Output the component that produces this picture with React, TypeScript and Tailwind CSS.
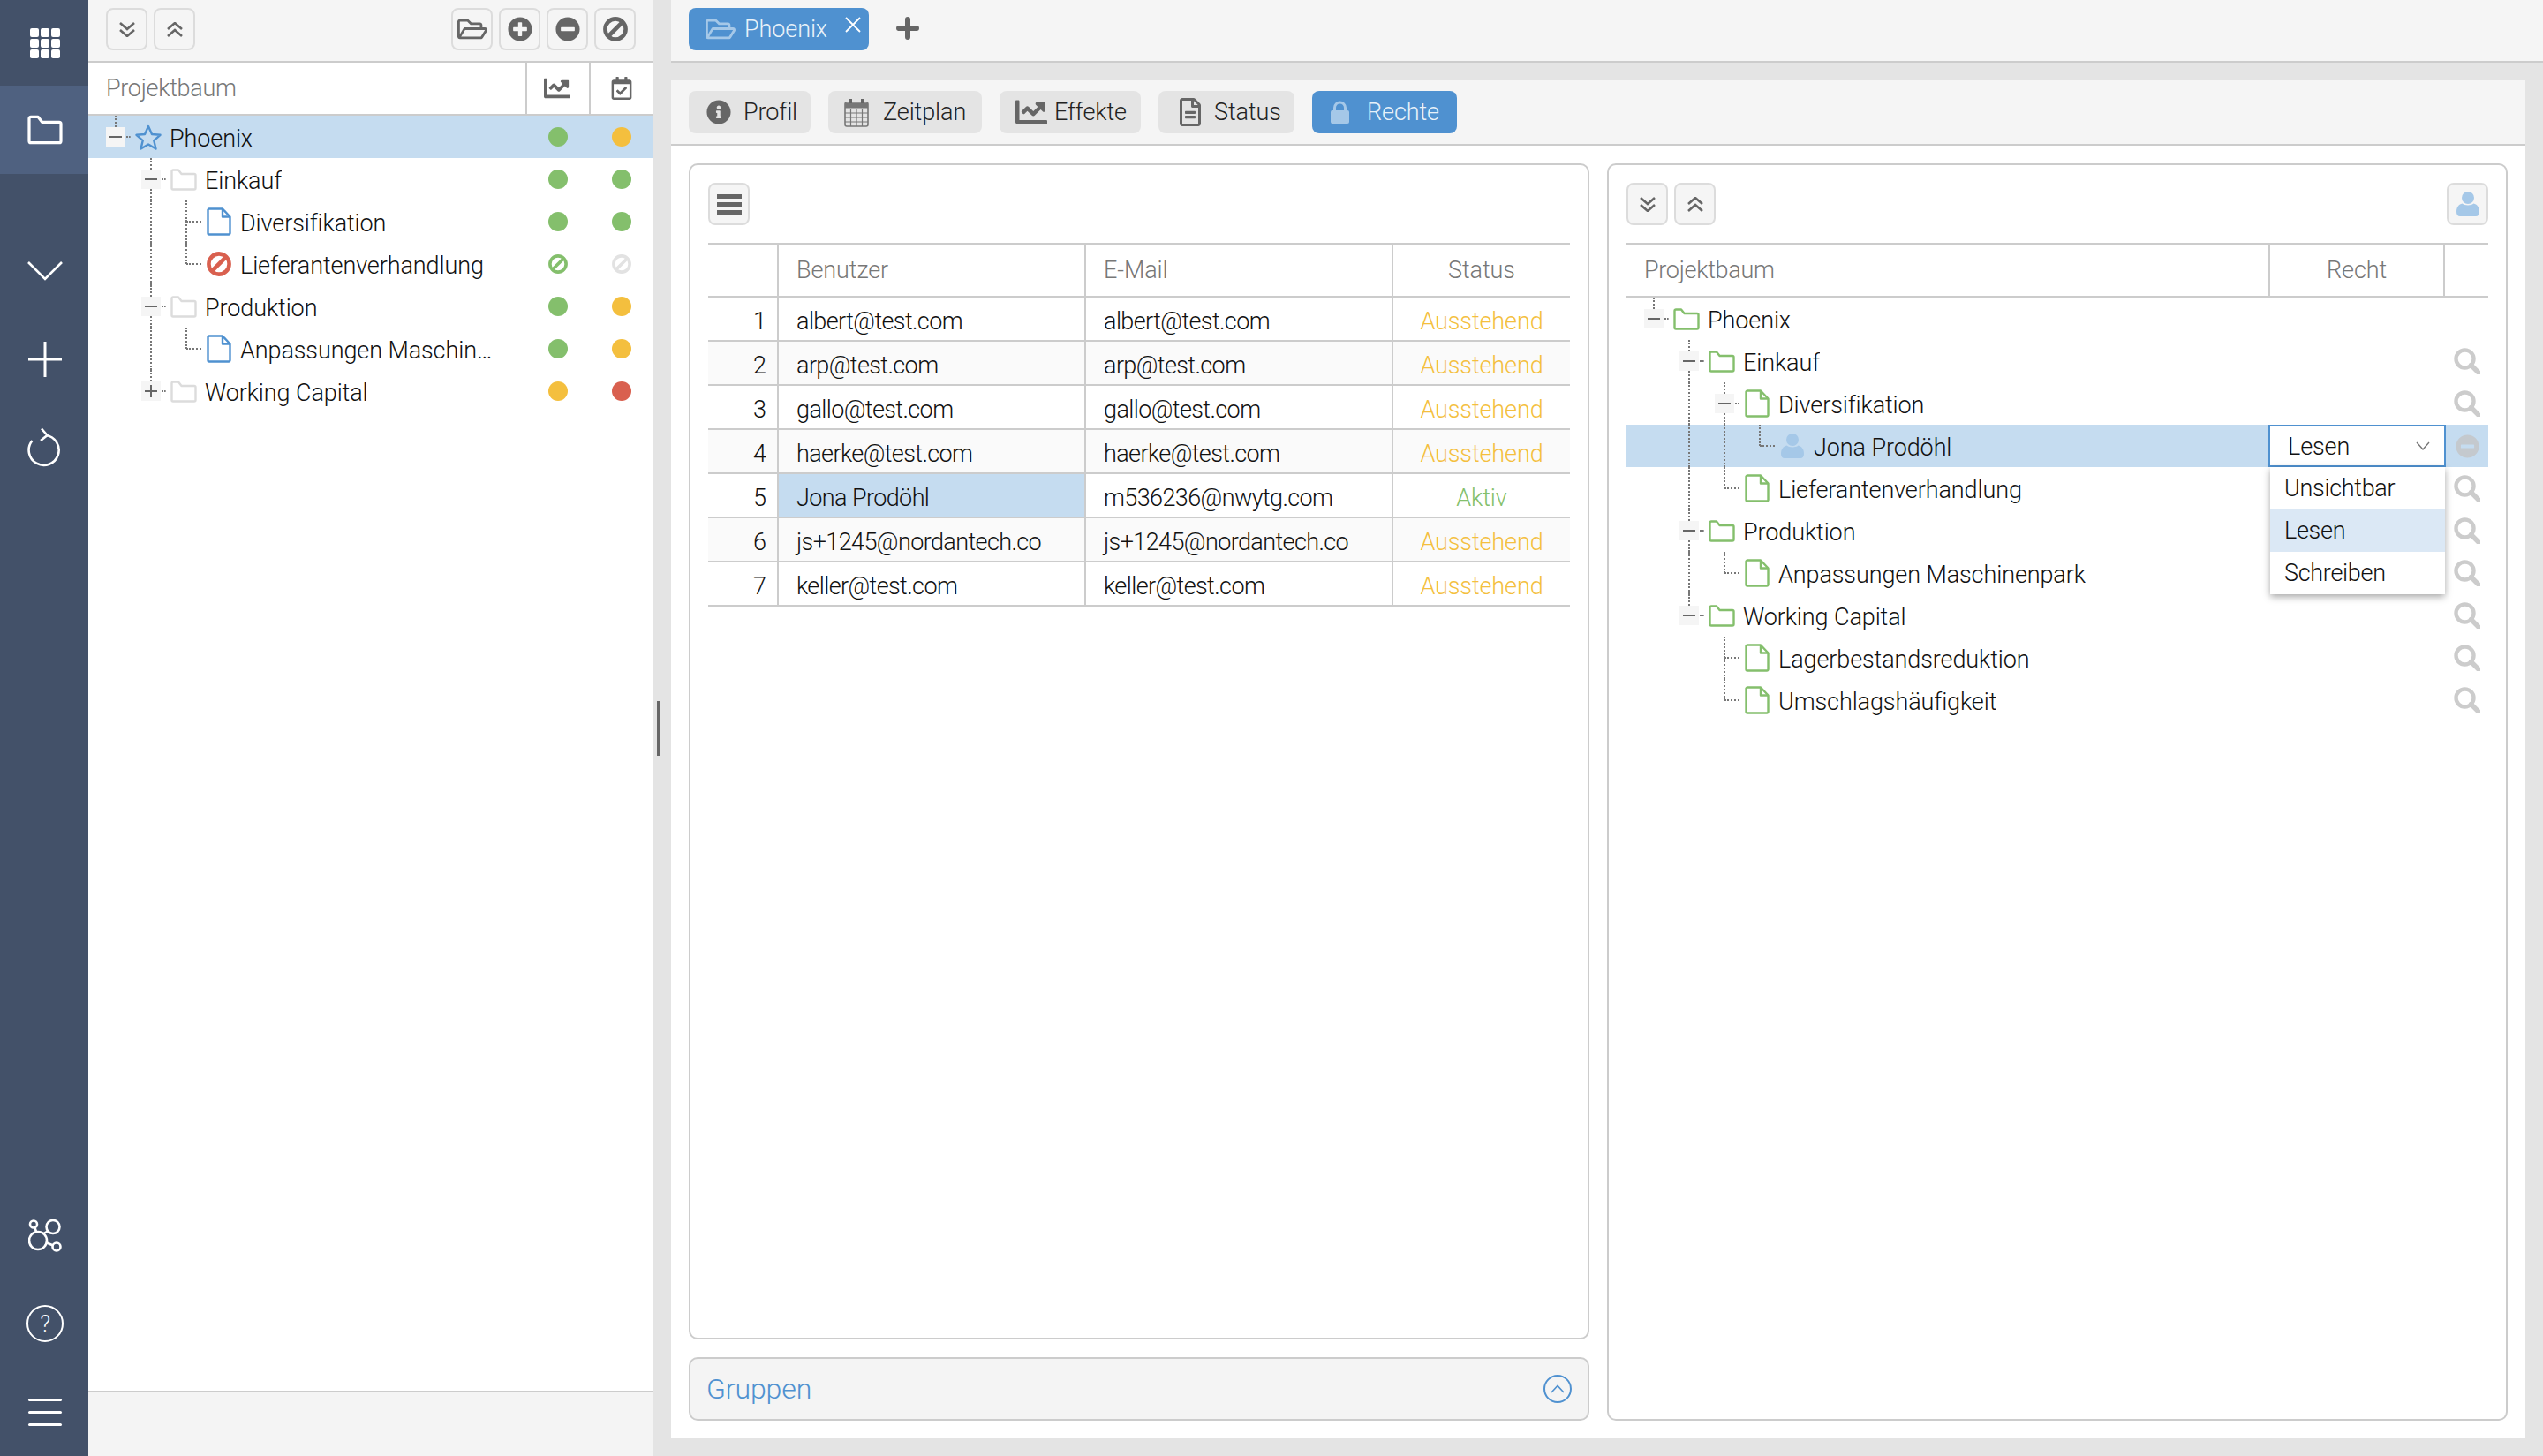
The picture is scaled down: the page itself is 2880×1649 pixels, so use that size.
import {
  FaChartLine,
  FaInfoCircle,
  FaMinusCircle,
  FaPlusCircle,
  FaRegCalendarCheck,
  FaRegFileAlt,
  FaRegFolderOpen,
} from "react-icons/fa";
import type { ReactNode } from "react";

const green = "#84bf6c";
const yellow = "#f4bf3e";
const red = "#d9604f";
const blue = "#4f91d0";

function FolderIcon({ color, className }: { color: string; className?: string }) {
  return (
    <svg viewBox="0 0 30 25" className={className ?? "w-[30px] h-[25px]"} fill="none" stroke={color} strokeWidth="2.4" strokeLinejoin="round">
      <path d="M1.5 22 V3 a1.5 1.5 0 0 1 1.5 -1.5 H9 l3.5 4.5 H27 a1.5 1.5 0 0 1 1.5 1.5 V22 a1.5 1.5 0 0 1 -1.5 1.5 H3 a1.5 1.5 0 0 1 -1.5 -1.5 Z" />
    </svg>
  );
}

function DocIcon({ color }: { color: string }) {
  return (
    <svg viewBox="0 0 28 32" className="w-[28px] h-[32px]" fill="none" stroke={color} strokeWidth="2.4" strokeLinejoin="round">
      <path d="M2.5 1.5 H18 L26.5 10.5 V29 a1.5 1.5 0 0 1 -1.5 1.5 H3 a1.5 1.5 0 0 1 -1.5 -1.5 V2.5 Z" />
      <path d="M18 1.5 V10.5 H26.5" />
    </svg>
  );
}

function StarIcon() {
  return (
    <svg viewBox="0 0 30 29" className="w-[30px] h-[29px]" fill="none" stroke={blue} strokeWidth="2.4" strokeLinejoin="round">
      <path d="M15 2 L19 11 L28.5 11.8 L21.3 18.2 L23.5 27.5 L15 22.5 L6.5 27.5 L8.7 18.2 L1.5 11.8 L11 11 Z" />
    </svg>
  );
}

function UserIcon({ className }: { className: string }) {
  return (
    <svg viewBox="0 0 26 28" className={className} fill="#a5c8e8">
      <circle cx="13" cy="7" r="7" />
      <path d="M0 23 C0 17 3 14.5 6.5 13.5 C9 16 17 16 19.5 13.5 C23 14.5 26 17 26 23 C26 26 24.5 28 22 28 H4 C1.5 28 0 26 0 23 Z" />
    </svg>
  );
}

function BanIcon({ size, color }: { size: number; color: string }) {
  return (
    <svg viewBox="0 0 28 28" width={size} height={size} fill="none" stroke={color} strokeWidth="4.6">
      <circle cx="14" cy="14" r="11.6" />
      <path d="M6 22 L22 6" />
    </svg>
  );
}

function SearchIcon() {
  return (
    <svg viewBox="0 0 30 30" className="w-[30px] h-[30px]" fill="none" stroke="#ccc" strokeWidth="4.4">
      <circle cx="12.5" cy="12.5" r="10" />
      <path d="M19.5 19.5 L28 28" strokeWidth="5.4" strokeLinecap="round" />
    </svg>
  );
}

function DoubleChevron({ up }: { up?: boolean }) {
  return (
    <svg viewBox="0 0 18 17" className={`w-[18px] h-[17px] ${up ? "rotate-180" : ""}`} fill="none" stroke="#666" strokeWidth="2.6">
      <path d="M1 1 L9 8 L17 1 M1 9 L9 16 L17 9" />
    </svg>
  );
}

function GridIcon() {
  return (
    <div className="grid grid-cols-3 gap-[2px] w-[34px]">
      {Array.from({ length: 9 }).map((_, i) => (
        <span key={i} className="w-[10px] h-[10px] rounded-[2px] bg-white" />
      ))}
    </div>
  );
}

function SideSlot({ children, active }: { children: ReactNode; active?: boolean }) {
  return <div className={`h-[100px] flex items-center justify-center pl-[2px] ${active ? "bg-[#4f6180]" : ""}`}>{children}</div>;
}

function Sidebar() {
  return (
    <div className="w-[100px] h-full flex flex-col bg-[#435169] text-white shrink-0">
      <div className="h-[97px] flex items-center justify-center pl-[2px]">
        <GridIcon />
      </div>
      <SideSlot active>
        <FolderIcon color="#fff" className="w-[40px] h-[34px]" />
      </SideSlot>
      <div className="h-[60px]" />
      <SideSlot>
        <svg viewBox="0 0 40 22" className="w-[40px] h-[22px]" fill="none" stroke="#fff" strokeWidth="2.6">
          <path d="M1 1 L20 20 L39 1" />
        </svg>
      </SideSlot>
      <SideSlot>
        <svg viewBox="0 0 40 40" className="w-[40px] h-[40px]" fill="none" stroke="#fff" strokeWidth="3">
          <path d="M20 0 V40 M1 20 H39" />
        </svg>
      </SideSlot>
      <SideSlot>
        <svg viewBox="0 0 40 46" className="w-[40px] h-[46px]" fill="none" stroke="#fff" strokeWidth="2.6">
          <path d="M21 9 A17 17 0 1 1 5.5 15" />
          <path d="M16 1.5 L22.5 9 L15 15" />
        </svg>
      </SideSlot>
      <div className="flex-1" />
      <SideSlot>
        <svg viewBox="0 0 38 37" className="w-[38px] h-[37px]" fill="none" stroke="#fff" strokeWidth="2.6">
          <circle cx="11" cy="24" r="10" />
          <circle cx="6" cy="5.5" r="4" />
          <circle cx="28" cy="8.5" r="7.5" />
          <circle cx="32" cy="31" r="4.5" />
          <path d="M7.5 9.5 L9 14 M17.5 16 L22.5 13 M20 26 L28 29.5" />
        </svg>
      </SideSlot>
      <SideSlot>
        <div className="w-[42px] h-[42px] rounded-full border-[2.5px] border-white flex items-center justify-center text-[26px] leading-none">?</div>
      </SideSlot>
      <SideSlot>
        <div className="w-[38px] flex flex-col gap-[11px]">
          <span className="h-[3px] bg-white rounded-full" />
          <span className="h-[3px] bg-white rounded-full" />
          <span className="h-[3px] bg-white rounded-full" />
        </div>
      </SideSlot>
    </div>
  );
}

function ToolButton({ children, className }: { children: ReactNode; className?: string }) {
  return (
    <div className={`w-[47px] h-[48px] flex items-center justify-center rounded-[8px] border-2 border-[#dcdcdc] bg-[#f5f5f5] text-[#666] shrink-0 ${className ?? ""}`}>
      {children}
    </div>
  );
}

function Toggle({ sign }: { sign: "-" | "+" }) {
  return (
    <div className="relative w-[22px] h-[22px] bg-[#f5f5f5] flex items-center justify-center shrink-0">
      <span className="w-[14px] h-[2px] bg-[#666]" />
      {sign === "+" && <span className="absolute w-[2px] h-[14px] bg-[#666]" />}
    </div>
  );
}

interface TreeNode {
  label: string;
  depth: number;
  icon: ReactNode;
  toggle?: "-" | "+";
  hasNext?: boolean;
  through?: number[];
  dots?: [string, string];
  selected?: boolean;
}

// the dotted guide lines of the tree, one row at a time
function Guides({ node }: { node: TreeNode }) {
  const x = 20 + 40 * node.depth + 10;
  return (
    <>
      {(node.through ?? []).map((d) => (
        <span key={d} className="absolute top-0 bottom-0 w-0 border-l-2 border-dotted border-[#777]" style={{ left: 30 + 40 * d }} />
      ))}
      <span className={`absolute top-0 w-0 border-l-2 border-dotted border-[#777] ${node.toggle ? "h-[13px]" : "h-[24px]"}`} style={{ left: x }} />
      {node.hasNext && <span className="absolute top-[24px] bottom-0 w-0 border-l-2 border-dotted border-[#777]" style={{ left: x }} />}
      {node.toggle ? (
        <span className="absolute top-[23px] h-0 w-[5px] border-t-2 border-dotted border-[#777]" style={{ left: x + 13 }} />
      ) : (
        <span className="absolute top-[23px] h-0 w-[17px] border-t-2 border-dotted border-[#777]" style={{ left: x + 1 }} />
      )}
    </>
  );
}

function TreeLabel({ node }: { node: TreeNode }) {
  return (
    <div className="relative flex flex-1 min-w-0 h-full items-center" style={{ paddingLeft: 20 + 40 * node.depth }}>
      <Guides node={node} />
      {node.toggle ? <Toggle sign={node.toggle} /> : <span className="w-[22px] shrink-0" />}
      <span className="ml-[11px] w-[30px] flex items-center justify-center shrink-0">{node.icon}</span>
      <span className="ml-[9px] pt-[4px] truncate">{node.label}</span>
    </div>
  );
}

function Dot({ color, ban }: { color: string; ban?: boolean }) {
  return (
    <div className="flex-1 flex items-center justify-center">
      {ban ? <BanIcon size={22} color={color} /> : <span className="w-[22px] h-[22px] rounded-full" style={{ backgroundColor: color }} />}
    </div>
  );
}

const greyFolder = <FolderIcon color="#dcdcdc" />;
const blueDoc = <DocIcon color={blue} />;

const projectRows: TreeNode[] = [
  { label: "Phoenix", depth: 0, toggle: "-", icon: <StarIcon />, selected: true, dots: [green, yellow] },
  { label: "Einkauf", depth: 1, toggle: "-", hasNext: true, icon: greyFolder, dots: [green, green] },
  { label: "Diversifikation", depth: 2, hasNext: true, through: [1], icon: blueDoc, dots: [green, green] },
  { label: "Lieferantenverhandlung", depth: 2, through: [1], icon: <BanIcon size={28} color={red} />, dots: ["ban-green", "ban-grey"] },
  { label: "Produktion", depth: 1, toggle: "-", hasNext: true, icon: greyFolder, dots: [green, yellow] },
  { label: "Anpassungen Maschinenpark", depth: 2, through: [1], icon: blueDoc, dots: [green, yellow] },
  { label: "Working Capital", depth: 1, toggle: "+", icon: greyFolder, dots: [yellow, red] },
];

function ProjectPanel() {
  return (
    <div className="w-[640px] h-full flex flex-col bg-white shrink-0">
      <div className="h-[71px] flex items-start pt-[9px] px-[20px] gap-[7px] bg-[#f5f5f5] border-b-2 border-[#ccc] shrink-0">
        <ToolButton><DoubleChevron /></ToolButton>
        <ToolButton><DoubleChevron up /></ToolButton>
        <div className="flex-1" />
        <ToolButton><FaRegFolderOpen size={34} /></ToolButton>
        <ToolButton><FaPlusCircle size={28} /></ToolButton>
        <ToolButton><FaMinusCircle size={28} /></ToolButton>
        <ToolButton><BanIcon size={28} color="#666" /></ToolButton>
      </div>
      <div className="h-[60px] flex border-b-2 border-[#ccc] shrink-0 text-[#777]">
        <div className="flex-1 flex items-center pl-[20px] tracking-[-0.3px] pt-[1px]">Projektbaum</div>
        <div className="w-[72px] flex items-center justify-center border-l-2 border-[#ccc] text-[#666] pr-[2px]"><FaChartLine size={30} /></div>
        <div className="w-[73px] flex items-center justify-center border-l-2 border-[#ccc] text-[#666] pr-[2px]"><FaRegCalendarCheck size={26} /></div>
      </div>
      <div className="flex-1">
        {projectRows.map((node) => (
          <div key={node.label} className={`h-[48px] flex items-center ${node.selected ? "bg-[#c5dcf0]" : ""}`}>
            <div className="flex-1 min-w-0 h-full flex pr-[30px]">
              <TreeLabel node={node} />
            </div>
            <div className="w-[145px] flex pl-[1px]">
              {node.dots?.[0] === "ban-green" ? <Dot color={green} ban /> : <Dot color={node.dots?.[0] ?? green} />}
              {node.dots?.[1] === "ban-grey" ? <Dot color="#e2e2e2" ban /> : <Dot color={node.dots?.[1] ?? green} />}
            </div>
          </div>
        ))}
      </div>
      <div className="h-[74px] bg-[#f4f4f4] border-t-2 border-[#ccc] shrink-0" />
    </div>
  );
}

function Gutter() {
  return (
    <div className="w-[20px] h-full bg-[#e4e4e4] flex items-center pl-[4px] shrink-0">
      <span className="w-[4px] h-[62px] bg-[#666]" />
    </div>
  );
}

function TabButton({ icon, label, width, active }: { icon: ReactNode; label: string; width: string; active?: boolean }) {
  return (
    <div className={`${width} h-[48px] rounded-[8px] flex items-center pl-[20px] shrink-0 ${active ? "bg-[#4f91d0] text-[#e8f1f9]" : "bg-[#e4e4e4] text-[#222]"}`}>
      {icon}
      <span>{label}</span>
    </div>
  );
}

function CalendarIcon() {
  return (
    <svg viewBox="0 0 28 33" className="w-[28px] h-[33px] mr-[16px] -ml-[2px]" fill="none" stroke="#777" strokeWidth="1.2">
      <rect x="1" y="5" width="26" height="27" rx="2" strokeWidth="1.6" />
      <path d="M1 12 H27 M1 17 H27 M1 22 H27 M1 27 H27 M7.5 12 V32 M14 12 V32 M20.5 12 V32" />
      <path d="M7.5 1 V8 M20.5 1 V8" strokeWidth="3" stroke="#666" />
      <path d="M1 6 H27 V11 H1 Z" fill="#777" stroke="none" />
    </svg>
  );
}

function LockIcon() {
  return (
    <svg viewBox="0 0 23 26" className="w-[23px] h-[26px] mr-[19px]" fill="#a5c8e8">
      <path d="M4 11 V8 a7.5 7.5 0 0 1 15 0 V11 H16 V8 a4.5 4.5 0 0 0 -9 0 V11 Z" />
      <rect x="1" y="11" width="21" height="15" rx="2" />
    </svg>
  );
}

const users = [
  ["albert@test.com", "albert@test.com"],
  ["arp@test.com", "arp@test.com"],
  ["gallo@test.com", "gallo@test.com"],
  ["haerke@test.com", "haerke@test.com"],
  ["Jona Prodöhl", "m536236@nwytg.com"],
  ["js+1245@nordantech.co", "js+1245@nordantech.co"],
  ["keller@test.com", "keller@test.com"],
];

function UsersCard() {
  return (
    <div className="flex-1 rounded-[10px] border-2 border-[#ccc] p-[20px] bg-white min-h-0">
      <ToolButton>
        <div className="w-[28px] flex flex-col gap-[4px]">
          <span className="h-[5px] bg-[#666]" />
          <span className="h-[5px] bg-[#666]" />
          <span className="h-[5px] bg-[#666]" />
        </div>
      </ToolButton>
      <div className="mt-[20px] h-[62px] grid grid-cols-[80px_348px_348px_1fr] border-y-2 border-[#ccc] text-[#777]">
        <div className="border-r-2 border-[#ccc]" />
        <div className="border-r-2 border-[#ccc] flex items-center pl-[20px] pt-[1px]">Benutzer</div>
        <div className="border-r-2 border-[#ccc] flex items-center pl-[20px] pt-[1px]">E-Mail</div>
        <div className="flex items-center justify-center pt-[1px]">Status</div>
      </div>
      {users.map(([name, mail], i) => (
        <div key={mail} className={`h-[50px] grid grid-cols-[80px_348px_348px_1fr] border-b-2 border-[#ccc] ${i % 2 === 1 ? "bg-[#fafafa]" : "bg-white"}`}>
          <div className="border-r-2 border-[#ccc] flex items-center justify-end pr-[12px] pt-[6px]">{i + 1}</div>
          <div className={`border-r-2 border-[#ccc] flex items-center pl-[20px] pt-[6px] tracking-[-0.6px] ${i === 4 ? "bg-[#c5dcf0]" : ""}`}>{name}</div>
          <div className="border-r-2 border-[#ccc] flex items-center pl-[20px] pt-[6px] tracking-[-0.6px]">{mail}</div>
          <div className={`flex items-center justify-center pt-[6px] ${i === 4 ? "text-[#84bf6c]" : "text-[#f4bf3e]"}`}>{i === 4 ? "Aktiv" : "Ausstehend"}</div>
        </div>
      ))}
    </div>
  );
}

function GroupsBar() {
  return (
    <div className="h-[72px] rounded-[10px] border-2 border-[#ccc] bg-[#f4f4f4] flex items-center justify-between pl-[18px] pr-[18px] text-[32px] text-[#4f91d0] shrink-0">
      <span>Gruppen</span>
      <span className="w-[32px] h-[32px] rounded-full border-2 border-[#4f91d0] flex items-center justify-center">
        <svg viewBox="0 0 16 10" className="w-[16px] h-[10px]" fill="none" stroke="#4f91d0" strokeWidth="1.6">
          <path d="M1 9 L8 1.5 L15 9" />
        </svg>
      </span>
    </div>
  );
}

const greenFolder = <FolderIcon color={green} />;
const greenDoc = <DocIcon color={green} />;

const rightsRows: TreeNode[] = [
  { label: "Phoenix", depth: 0, toggle: "-", icon: greenFolder },
  { label: "Einkauf", depth: 1, toggle: "-", hasNext: true, icon: greenFolder },
  { label: "Diversifikation", depth: 2, toggle: "-", hasNext: true, through: [1], icon: greenDoc },
  { label: "Jona Prodöhl", depth: 3, through: [1, 2], selected: true, icon: <UserIcon className="w-[26px] h-[28px]" /> },
  { label: "Lieferantenverhandlung", depth: 2, through: [1], icon: greenDoc },
  { label: "Produktion", depth: 1, toggle: "-", hasNext: true, icon: greenFolder },
  { label: "Anpassungen Maschinenpark", depth: 2, through: [1], icon: greenDoc },
  { label: "Working Capital", depth: 1, toggle: "-", hasNext: false, icon: greenFolder },
  { label: "Lagerbestandsreduktion", depth: 2, hasNext: true, icon: greenDoc },
  { label: "Umschlagshäufigkeit", depth: 2, icon: greenDoc },
];

function RoleSelect() {
  return (
    <div className="relative w-[201px] h-[48px] -ml-[1px] border-2 border-[#4f91d0] bg-white flex items-center justify-between pl-[20px] pr-[16px]">
      <span className="pt-[3px]">Lesen</span>
      <svg viewBox="0 0 16 10" className="w-[16px] h-[10px]" fill="none" stroke="#777" strokeWidth="1.4">
        <path d="M1 1 L8 9 L15 1" />
      </svg>
      <div className="absolute top-[46px] left-0 w-[198px] bg-white shadow-[0_3px_8px_rgba(0,0,0,0.35)] z-10 tracking-[-0.3px]">
        <div className="h-[48px] flex items-center pl-[16px]">Unsichtbar</div>
        <div className="h-[48px] flex items-center pl-[16px] bg-[#dbe8f5]">Lesen</div>
        <div className="h-[48px] flex items-center pl-[16px]">Schreiben</div>
      </div>
    </div>
  );
}

function RightsCard() {
  return (
    <div className="flex-1 rounded-[10px] border-2 border-[#ccc] p-[20px] bg-white">
      <div className="flex gap-[7px]">
        <ToolButton><DoubleChevron /></ToolButton>
        <ToolButton><DoubleChevron up /></ToolButton>
        <div className="flex-1" />
        <ToolButton><UserIcon className="w-[26px] h-[28px]" /></ToolButton>
      </div>
      <div className="mt-[20px] h-[62px] flex border-y-2 border-[#ccc] text-[#777]">
        <div className="w-[727px] flex items-center pl-[20px] tracking-[-0.3px] pt-[1px]">Projektbaum</div>
        <div className="w-[200px] border-x-2 border-[#ccc] flex items-center justify-center pt-[1px]">Recht</div>
      </div>
      {rightsRows.map((node, i) => (
        <div key={node.label} className={`h-[48px] flex items-center ${node.selected ? "bg-[#c5dcf0]" : ""}`}>
          <div className="w-[728px] h-full flex">
            <TreeLabel node={node} />
          </div>
          <div className="w-[200px] h-full flex items-center">{node.selected && <RoleSelect />}</div>
          <div className="flex-1 flex items-center justify-center">
            {node.selected ? <FaMinusCircle size={27} color="#c4c9ce" /> : i > 0 && <SearchIcon />}
          </div>
        </div>
      ))}
    </div>
  );
}

export default function App() {
  return (
    <div className="w-[2880px] h-[1649px] flex overflow-hidden text-[27px] font-light tracking-[-0.1px] text-[#111] font-['Roboto',sans-serif]">
      <Sidebar />
      <ProjectPanel />
      <Gutter />
      <div className="flex-1 h-full flex flex-col bg-[#e4e4e4] min-w-0">
        <div className="h-[71px] flex items-start pt-[9px] pl-[20px] bg-[#f5f5f5] border-b-2 border-[#ccc] shrink-0">
          <div className="relative w-[204px] h-[48px] rounded-[8px] bg-[#4f91d0] text-[#e8f1f9] flex items-center pl-[19px]">
            <FaRegFolderOpen size={34} color="#a5c8e8" />
            <span className="ml-[10px]">Phoenix</span>
            <span className="absolute left-[177px] top-[10px] w-[18px] h-[18px]">
              <svg viewBox="0 0 18 18" className="w-[18px] h-[18px]" fill="none" stroke="#fff" strokeWidth="1.8">
                <path d="M1 1 L17 17 M17 1 L1 17" />
              </svg>
            </span>
          </div>
          <svg viewBox="0 0 26 26" className="w-[26px] h-[26px] ml-[31px] mt-[10px]" fill="none" stroke="#666" strokeWidth="6" strokeLinecap="round">
            <path d="M13 3 V23 M3 13 H23" />
          </svg>
        </div>
        <div className="flex-1 min-h-0 flex flex-col mt-[20px] mr-[20px] mb-[20px] bg-white">
          <div className="h-[74px] flex items-center gap-[20px] pl-[20px] bg-[#f5f5f5] border-b-2 border-[#ccc] shrink-0">
            <TabButton width="w-[138px]" label="Profil" icon={<FaInfoCircle size={28} color="#666" className="mr-[14px]" />} />
            <TabButton width="w-[174px]" label="Zeitplan" icon={<CalendarIcon />} />
            <TabButton width="w-[160px]" label="Effekte" icon={<FaChartLine size={36} color="#666" className="mr-[8px] -ml-[2px]" />} />
            <TabButton width="w-[154px]" label="Status" icon={<FaRegFileAlt size={32} color="#666" className="mr-[11px]" />} />
            <TabButton width="w-[164px]" label="Rechte" active icon={<LockIcon />} />
          </div>
          <div className="flex-1 min-h-0 flex gap-[20px] p-[20px]">
            <div className="w-[1020px] flex flex-col gap-[20px]">
              <UsersCard />
              <GroupsBar />
            </div>
            <RightsCard />
          </div>
        </div>
      </div>
    </div>
  );
}
